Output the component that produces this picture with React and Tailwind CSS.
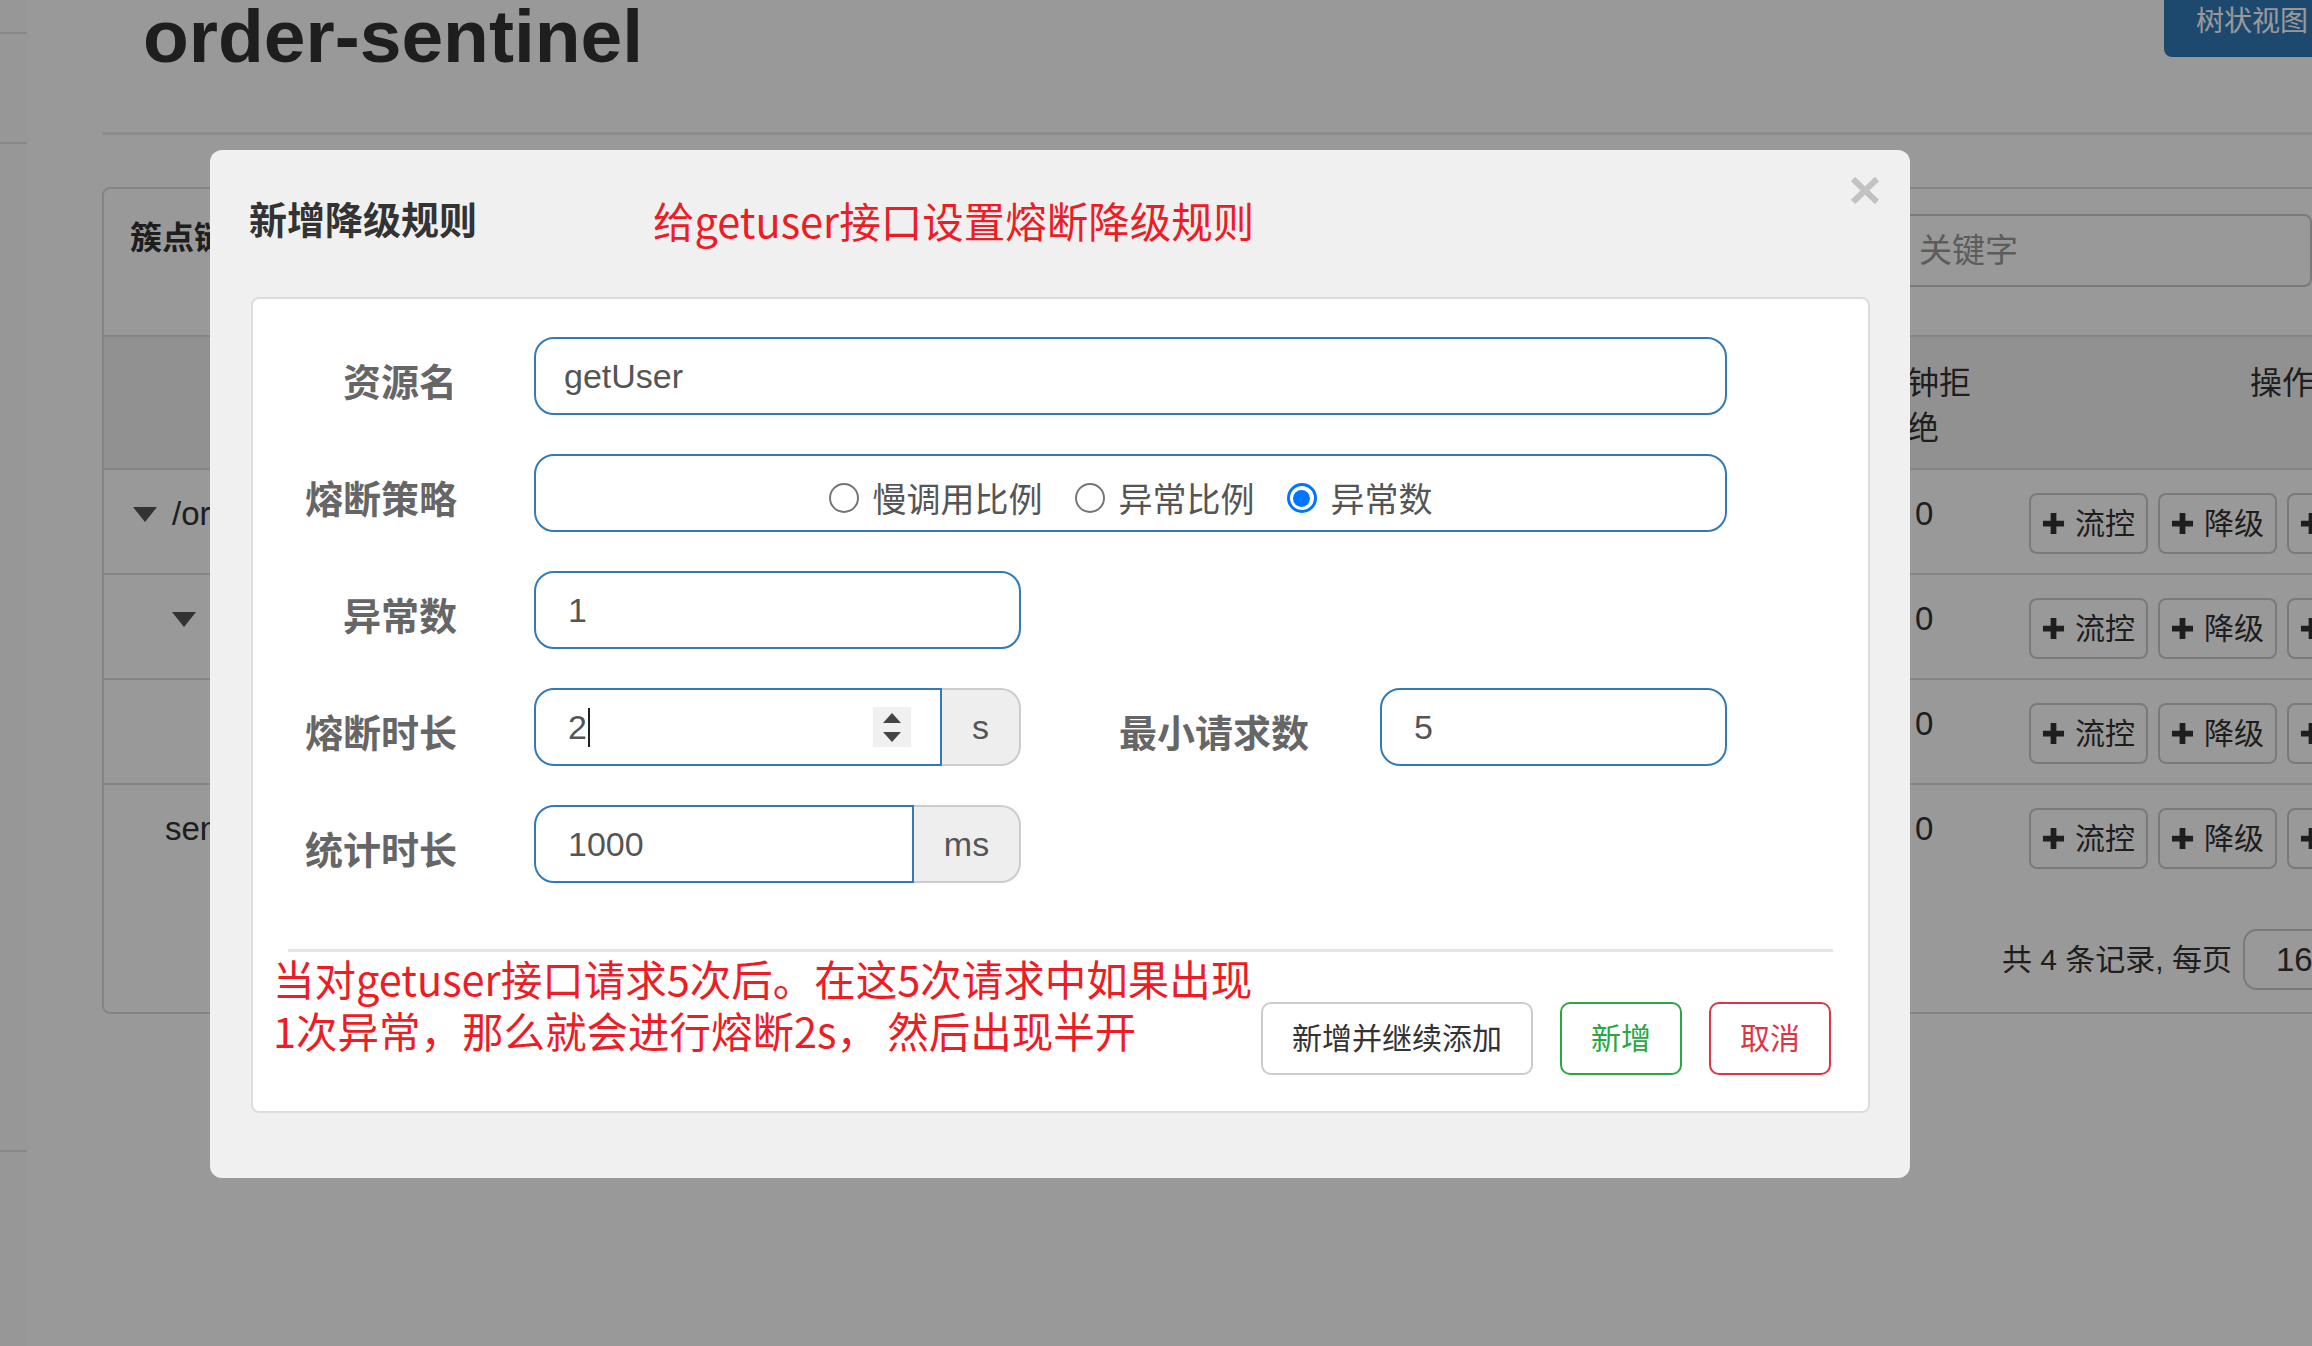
import { Fragment } from "react";

const sans = "font-['Liberation_Sans','Noto_Sans_CJK_SC',sans-serif]";
const cjk = "font-['Noto_Sans_CJK_SC',sans-serif]";

function PlusIcon() {
  return (
    <svg width="23" height="23" viewBox="0 0 24 24" className="shrink-0">
      <path d="M9 1h6v8h8v6h-8v8H9v-8H1V9h8z" fill="#333" />
    </svg>
  );
}

function OpButton({ label }) {
  return (
    <div className="w-[119px] h-[61px] shrink-0 border-2 border-[#ccc] rounded-[8px] bg-white flex items-center justify-center gap-[10px] text-[30px] text-[#333]">
      <PlusIcon />
      <span>{label}</span>
    </div>
  );
}

function Caret({ indent }) {
  return (
    <svg width="24" height="15" viewBox="0 0 24 15" className={indent}>
      <path d="M0 0h24L12 15z" fill="#555" />
    </svg>
  );
}

const rows = [
  { caret: "ml-[29px]", text: "/order/getUser", textClass: "ml-[15px]" },
  { caret: "ml-[68px]", text: "getUser", textClass: "ml-[16px]" },
  { caret: null, text: "getUserById", textClass: "ml-[140px]" },
  { caret: null, text: "sentinel_spring_web_context", textClass: "ml-[61px]" },
];

function BackgroundPage() {
  return (
    <div className="flex h-full">
      <aside className="w-[27px] shrink-0 bg-[#fcfcfc] flex flex-col">
        <div className="h-[34px] border-b-2 border-[#e4e4e4]" />
        <div className="h-[110px] border-b-2 border-[#e4e4e4]" />
        <div className="h-[1008px] border-b-2 border-[#e4e4e4]" />
      </aside>

      <main className="pl-[75px] shrink-0">
        <div className="w-[2242px]">
          <div className="flex justify-between items-start h-[135px] border-b-[3px] border-[#eaeaea]">
            <h1 className="pl-[41px] mt-[-1px] text-[75px] leading-[75px] font-bold text-[#333]">
              order-sentinel
            </h1>
            <div className="w-[180px] h-[70px] mt-[-13px] bg-[#337ab7] rounded-[8px] text-white text-[28px] pl-[32px] pt-[17px] leading-[36px]">
              树状视图
            </div>
          </div>

          <div className="mt-[52px] border-2 border-[#ddd] rounded-[8px] bg-white">
            <div className="flex pt-[25px] pb-[48px] border-b-2 border-[#ddd]">
              <div className="w-[1791px] pl-[26px] text-[32px] leading-[48px] font-bold text-[#333]">
                簇点链路
              </div>
              <div className="flex-1 mr-[30px] h-[73px] border-2 border-[#ccc] rounded-[8px] pl-[22px] flex items-center text-[33px] text-[#999]">
                关键字
              </div>
            </div>

            <div className="flex h-[133px] bg-[#f2f2f2] border-b-2 border-[#ddd] pt-[24px] text-[32px] leading-[45px] text-[#333]">
              <div className="w-[1800px] shrink-0" />
              <div className="w-[125px] shrink-0 pl-[3px]">
                <div className="w-[66px]">钟拒绝</div>
              </div>
              <div className="pl-[221px]">操作</div>
            </div>

            {rows.map((row, i) => (
              <div
                key={i}
                className={`flex h-[105px] pt-[22px] text-[33px] leading-[44px] text-[#333] ${
                  i < rows.length - 1 ? "border-b-2 border-[#ddd]" : ""
                }`}
              >
                <div className="w-[1800px] shrink-0 flex items-center h-[44px] overflow-hidden whitespace-nowrap">
                  {row.caret && <Caret indent={row.caret} />}
                  <span className={row.textClass}>{row.text}</span>
                </div>
                <div className="w-[125px] shrink-0 pl-[11px]">0</div>
                <div className="flex gap-[10px] mt-[1px]">
                  <OpButton label="流控" />
                  <OpButton label="降级" />
                  <OpButton label="热点" />
                </div>
              </div>
            ))}

            <div className="flex h-[122px] pt-[39px]">
              <div className="w-[1892px] shrink-0" />
              <div className="w-[236px] shrink-0 text-right text-[30px] leading-[61px] text-[#333] whitespace-nowrap">
                共 4 条记录, 每页
              </div>
              <div className="ml-[11px] w-[130px] h-[61px] border-2 border-[#ccc] rounded-[14px] pl-[31px] flex items-center text-[33px] text-[#333]">
                16
              </div>
            </div>
          </div>
        </div>
      </main>
    </div>
  );
}

function Label({ children, width = "w-[204px]" }) {
  return (
    <div className={`${width} shrink-0 text-right text-[38px] leading-[52px] font-bold text-[#666] pt-[8px] ${cjk}`}>
      {children}
    </div>
  );
}

const inputBox =
  "h-[78px] border-2 border-[#337ab7] bg-white flex items-center text-[34px] text-[#555]";

function Radio({ checked, label }) {
  return (
    <div className="flex items-center gap-[14px]">
      {checked ? (
        <span className="w-[30px] h-[30px] rounded-full border-[3px] border-[#0075ff] bg-white flex items-center justify-center">
          <span className="w-[17px] h-[17px] rounded-full bg-[#0075ff]" />
        </span>
      ) : (
        <span className="w-[30px] h-[30px] rounded-full border-2 border-[#767676] bg-white" />
      )}
      <span className={`text-[34px] leading-[44px] text-[#555] ${cjk}`}>{label}</span>
    </div>
  );
}

function Spinner() {
  return (
    <div className="ml-auto mr-[29px] w-[38px] h-[40px] bg-[#f0f0f0] flex flex-col items-center justify-center gap-[9px]">
      <svg width="18" height="10" viewBox="0 0 18 10">
        <path d="M9 0l9 10H0z" fill="#444" />
      </svg>
      <svg width="18" height="10" viewBox="0 0 18 10">
        <path d="M0 0h18L9 10z" fill="#444" />
      </svg>
    </div>
  );
}

function Addon({ children, width }) {
  return (
    <div className={`${width} h-[78px] bg-[#eee] border-2 border-l-0 border-[#ccc] rounded-r-[20px] flex items-center justify-center text-[34px] text-[#555]`}>
      {children}
    </div>
  );
}

function Modal() {
  return (
    <div className="absolute inset-0 bg-black/40 pl-[210px] pt-[150px]">
      <div className={`w-[1700px] h-[1028px] rounded-[12px] bg-[#f0f0f0] ${sans}`}>
        <div className="flex items-start h-[147px]">
          <div className={`w-[443px] pl-[39px] pt-[42px] text-[38px] leading-[52px] font-bold text-[#333] ${cjk}`}>
            新增降级规则
          </div>
          <div className={`pt-[44px] text-[41.5px] leading-[52px] text-[#ee1c25] ${cjk}`}>
            给getuser接口设置熔断降级规则
          </div>
          <svg width="30" height="27" viewBox="0 0 30 27" className="ml-auto mr-[30px] mt-[27px]">
            <path d="M3 2l24 23M27 2L3 25" stroke="#c2c2c2" strokeWidth="6" />
          </svg>
        </div>

        <div className="ml-[41px] w-[1619px] h-[816px] border-2 border-[#dcdcdc] rounded-[8px] bg-white pt-[38px]">
          <div className="flex flex-col gap-[39px]">
            <div className="flex items-center">
              <Label>资源名</Label>
              <div className={`ml-[77px] w-[1193px] rounded-[20px] px-[28px] ${inputBox}`}>getUser</div>
            </div>

            <div className="flex items-center">
              <Label>熔断策略</Label>
              <div className={`ml-[77px] w-[1193px] rounded-[20px] justify-center gap-[32px] pt-[10px] ${inputBox}`}>
                <Radio label="慢调用比例" />
                <Radio label="异常比例" />
                <Radio checked label="异常数" />
              </div>
            </div>

            <div className="flex items-center">
              <Label>异常数</Label>
              <div className={`ml-[77px] w-[487px] rounded-[20px] px-[32px] ${inputBox}`}>1</div>
            </div>

            <div className="flex items-center">
              <Label>熔断时长</Label>
              <div className="ml-[77px] flex">
                <div className={`w-[408px] rounded-l-[20px] pl-[32px] ${inputBox}`}>
                  <span>2</span>
                  <span className="ml-[1px] w-[2px] h-[39px] bg-[#222]" />
                  <Spinner />
                </div>
                <Addon width="w-[79px]">s</Addon>
              </div>
              <Label width="w-[288px]">最小请求数</Label>
              <div className={`ml-[71px] w-[347px] rounded-[20px] px-[32px] ${inputBox}`}>5</div>
            </div>

            <div className="flex items-center">
              <Label>统计时长</Label>
              <div className="ml-[77px] flex">
                <div className={`w-[380px] rounded-l-[20px] pl-[32px] ${inputBox}`}>1000</div>
                <Addon width="w-[107px]">ms</Addon>
              </div>
            </div>
          </div>

          <div className="mx-[35px] mt-[66px] h-[3px] bg-[#e5e5e5]" />

          <div className="flex pl-[35px] pr-[37px]">
            <div className={`ml-[-15px] text-[41.5px] leading-[52px] text-[#ee1c25] whitespace-nowrap ${cjk}`}>
              当对getuser接口请求5次后。在这5次请求中如果出现
              <br />
              1次异常，那么就会进行熔断2s， 然后出现半开
            </div>
            <div className="ml-auto mt-[50px] flex gap-[27px] text-[30px]">
              <div className="w-[272px] h-[73px] border-2 border-[#ccc] rounded-[10px] flex items-center justify-center text-[#333]">
                新增并继续添加
              </div>
              <div className="w-[122px] h-[73px] border-2 border-[#28a745] rounded-[10px] flex items-center justify-center text-[#28a745]">
                新增
              </div>
              <div className="w-[122px] h-[73px] border-2 border-[#dc3545] rounded-[10px] flex items-center justify-center text-[#dc3545]">
                取消
              </div>
            </div>
          </div>
        </div>
      </div>
    </div>
  );
}

export default function App() {
  return (
    <div className={`relative w-[2312px] h-[1346px] overflow-hidden bg-white ${sans}`}>
      <BackgroundPage />
      <Modal />
    </div>
  );
}
